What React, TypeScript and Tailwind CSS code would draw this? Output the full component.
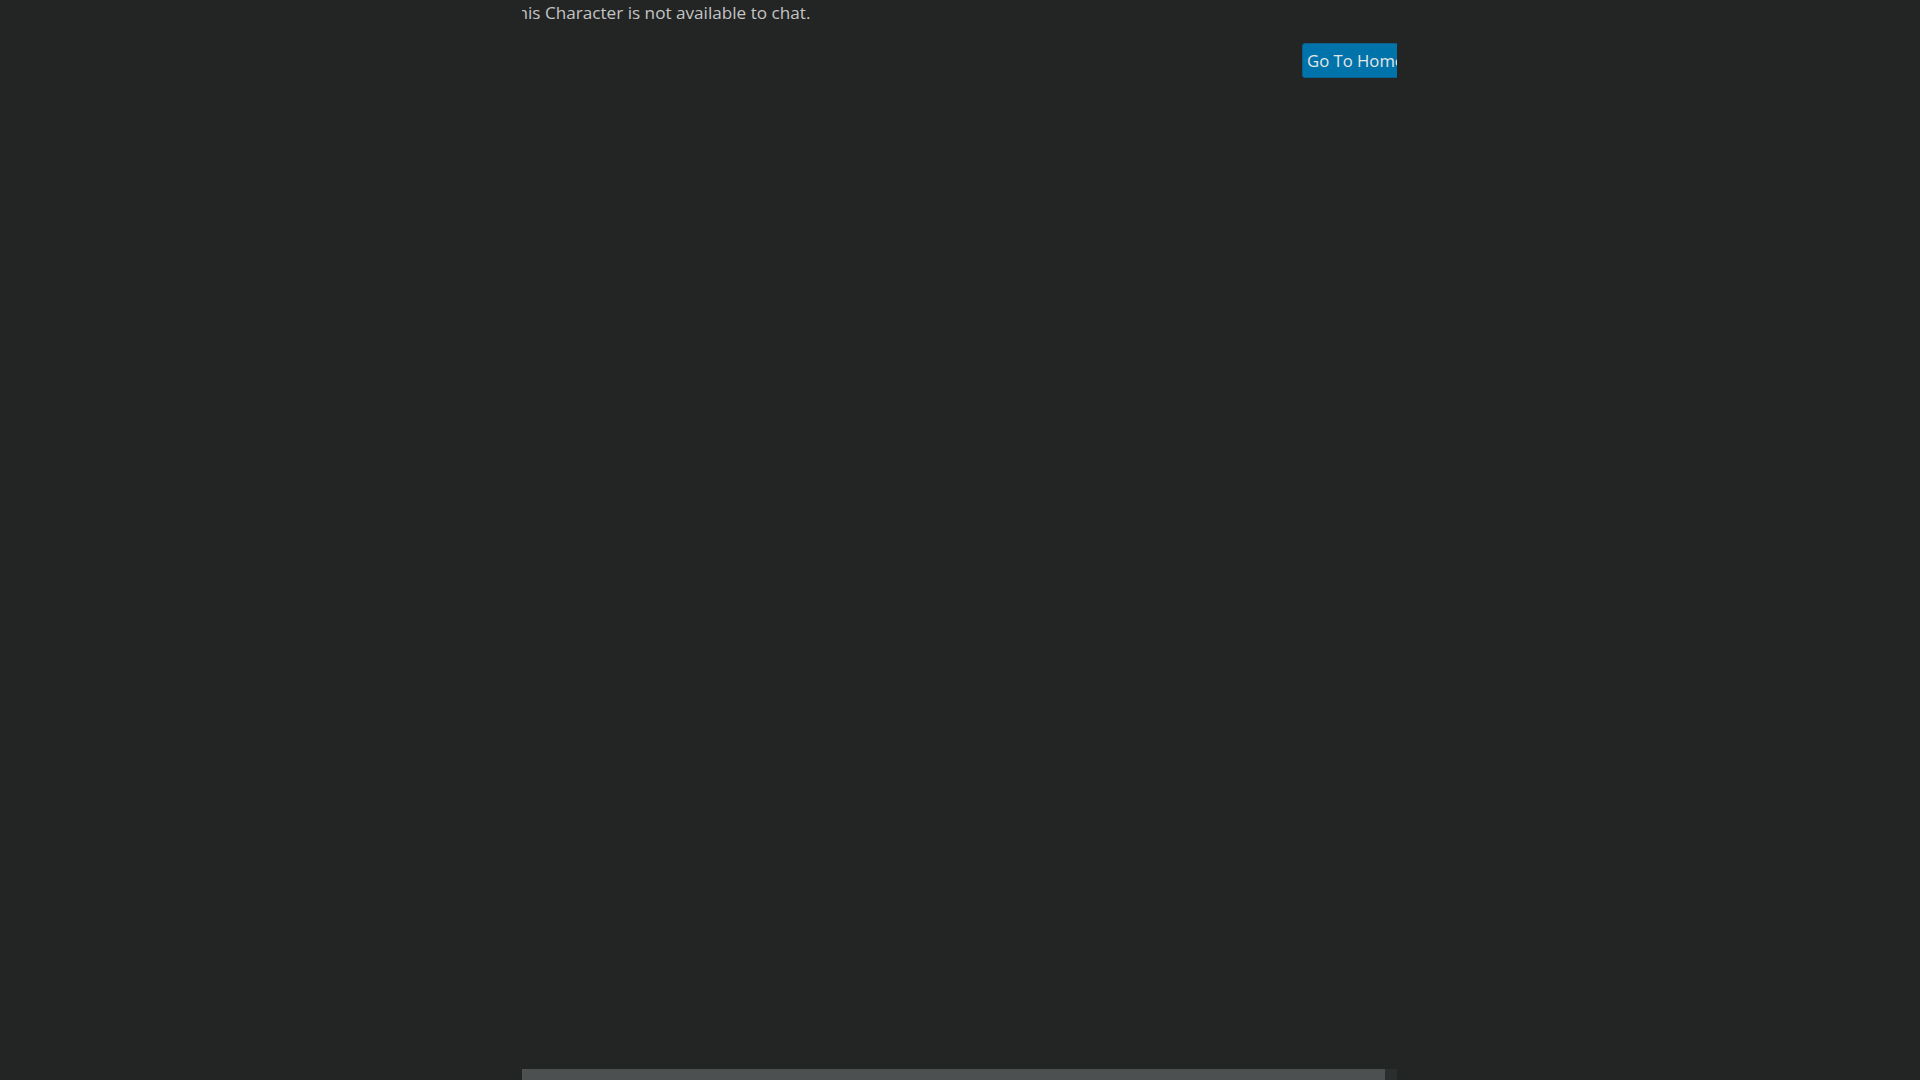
import React from "react";

export default function App() {
  return (
    <div
      className="w-full h-screen bg-[#232525] flex overflow-hidden"
      style={{ fontFamily: '"Open Sans", "Noto Sans", sans-serif' }}
    >
      <div className="ml-[522px] w-[875px] h-full flex flex-col overflow-hidden">
        <div className="flex-1 overflow-hidden">
          <div className="-ml-[14px] w-[896px] flex flex-col">
            <p className="text-[17.15px] leading-[25px] text-[#c4c4c4] whitespace-nowrap">
              This Character is not available to chat.
            </p>
            <button className="self-end mt-[18px] h-[35px] w-[102px] pl-[4px] text-left rounded-[3px] border border-[#0b5f8c] bg-[#0073aa] text-[16.7px] leading-[24px] text-[#e6e6e6] whitespace-nowrap">
              Go To Home
            </button>
          </div>
        </div>
        <div className="h-[11px] flex">
          <div className="flex-1 bg-[#4c5050]" />
          <div className="w-[12px] bg-[#2a2e2e]" />
        </div>
      </div>
    </div>
  );
}
